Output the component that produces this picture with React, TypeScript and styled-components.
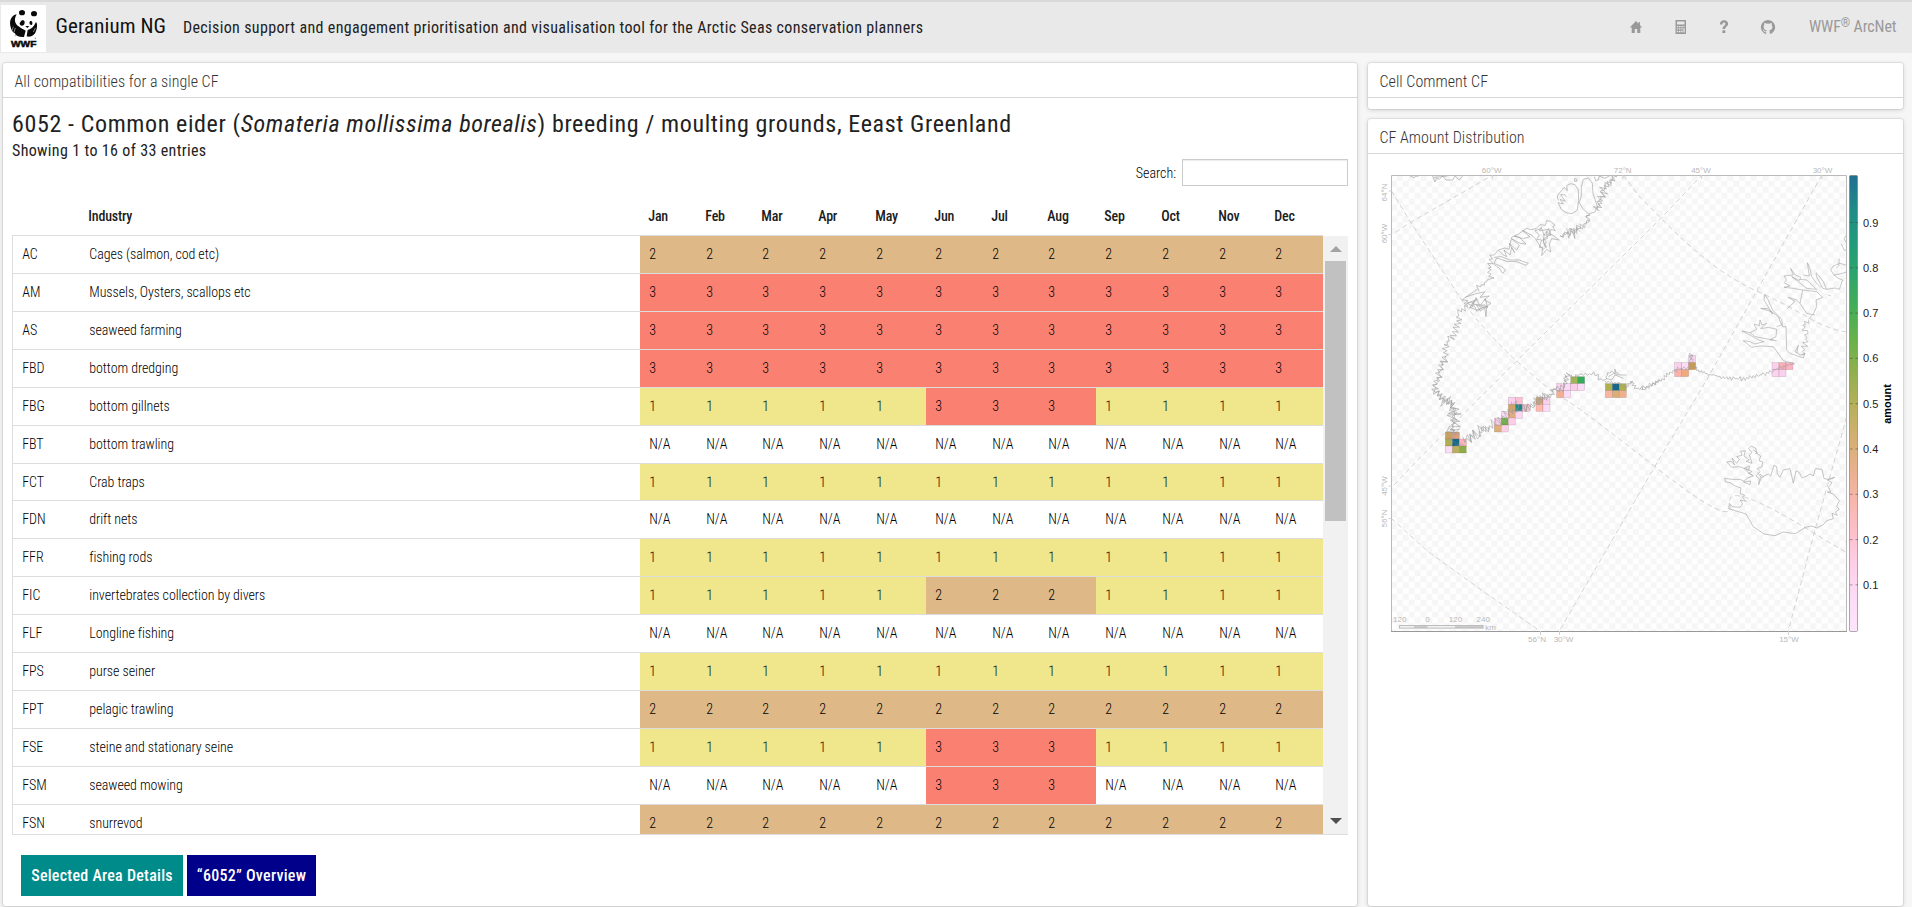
import React from "react";
import styled, { createGlobalStyle } from "styled-components";

const GlobalStyle = createGlobalStyle`
  * { box-sizing: border-box; }
  html, body { margin: 0; padding: 0; }
  body {
    background: #f6f6f6;
    color: #1c1c1c;
    font-family: "Roboto Condensed", Roboto, sans-serif;
    font-size: 16px;
    overflow: hidden;
  }
`;

/* ---------- page shell ---------- */

const Page = styled.div`
  display: flex;
  flex-direction: column;
  width: 1912px;
  height: 907px;
`;

const TopBar = styled.header`
  display: flex;
  align-items: flex-start;
  height: 53px;
  flex: none;
  border-top: 2px solid #dadada;
  background: #e9e9e9;
  padding: 3px 16px 0 1px;
`;

const LogoBox = styled.div`
  width: 45px;
  height: 47px;
  background: #fff;
`;

const Brand = styled.div`
  width: 111px;
  margin-left: 9.5px;
  font-size: 21px;
  line-height: 24px;
  letter-spacing: 0.1px;
  padding-top: 9px;
  color: #111;
  white-space: nowrap;
`;

const Tagline = styled.div`
  margin-left: 16.5px;
  font-size: 16px;
  line-height: 20px;
  letter-spacing: 0.343px;
  padding-top: 13px;
  color: #222;
`;

const Nav = styled.nav`
  display: flex;
  align-items: center;
  margin-left: auto;
  height: 34px;
  padding-top: 10px;
  color: #999;
`;

const NavIcon = styled.svg`
  display: block;
  width: 16px;
  height: 16px;
  margin-right: 28px;
  fill: currentColor;
`;

const NavText = styled.span`
  width: 87px;
  font-size: 16px;
  line-height: 20px;
  margin-left: 5px;
  white-space: nowrap;
  letter-spacing: -0.12px;
  sup {
    font-size: 12px;
    line-height: 0;
    vertical-align: 5px;
  }
`;

const Columns = styled.main`
  display: flex;
  gap: 11px;
  flex: 1;
  padding: 10px 9px 1px 3px;
  min-height: 0;
`;

const SideColumn = styled.div`
  display: flex;
  flex-direction: column;
  gap: 10px;
  width: 535px;
`;

const Panel = styled.section<{ $grow?: boolean }>`
  display: flex;
  flex-direction: column;
  flex: ${(p) => (p.$grow ? "1" : "none")};
  min-width: 0;
  min-height: 0;
  background: #fff;
  border-radius: 3px;
  box-shadow: 0 0 0 1px rgba(0, 0, 0, 0.06), 0 1px 5px rgba(0, 0, 0, 0.16);
`;

const PanelTitle = styled.div`
  height: 35px;
  flex: none;
  padding: 9px 11px 0 11.5px;
  border-bottom: 1px solid #d6d6d6;
  font-size: 16px;
  font-weight: 300;
  line-height: 20px;
  letter-spacing: 0.02px;
  color: #333;
`;

const EmptyBody = styled.div`
  height: 11px;
`;

/* ---------- compatibility table ---------- */

const Content = styled.div`
  display: flex;
  flex-direction: column;
  padding: 11px 9px 0 9px;
`;

const Heading = styled.h1`
  margin: 0;
  font-size: 24px;
  line-height: 30px;
  font-weight: 400;
  letter-spacing: 0.625px;
  white-space: nowrap;
  color: #222;
`;

const Info = styled.div`
  font-size: 16px;
  line-height: 20px;
  letter-spacing: 0.35px;
  margin-top: 2px;
  height: 20px;
  color: #222;
`;

const SearchRow = styled.label`
  display: flex;
  justify-content: flex-end;
  align-items: center;
  height: 27px;
  margin-top: -2px;
  font-size: 14px;
  font-weight: 300;
  color: #000;
  gap: 6px;
`;

const SearchInput = styled.input`
  width: 166px;
  height: 27px;
  border: 1px solid #ccc;
  box-shadow: inset 0 1px 1px rgba(0, 0, 0, 0.075);
  background: #fff;
  outline: none;
`;

const gridColumns =
  "67px 560px 57px 56px 57px 57px 59px 57px 56px 57px 57px 57px 56px 57px";

const HeadRow = styled.div`
  display: grid;
  grid-template-columns: ${gridColumns};
  height: 49px;
  padding: 21px 0 0 1px;
  font-size: 14px;
  font-weight: 500;
  line-height: 18px;
  letter-spacing: -0.2px;
  span {
    padding-left: 8.3px;
  }
`;

const ScrollArea = styled.div`
  display: flex;
  height: 600px;
  border: 1px solid #ddd;
  border-right: 0;
  border-top: 0;
`;

const Rows = styled.div`
  width: 1310px;
  overflow: hidden;
`;

const Row = styled.div<{ $short?: boolean }>`
  display: grid;
  grid-template-columns: ${gridColumns};
  height: ${(p) => (p.$short ? 37 : 38)}px;
  border-top: 1px solid #ddd;
  font-size: 14px;
  font-weight: 300;
  line-height: 18px;
  letter-spacing: -0.07px;
  color: #000;
`;

const tones: Record<string, string> = {
  "1": "#f0e68c",
  "2": "#deb887",
  "3": "#fa8072",
  "N/A": "#fff",
};

const Cell = styled.span<{ $tone?: string }>`
  padding: 9px 0 0 9.3px;
  background: ${(p) => (p.$tone ? tones[p.$tone] : "transparent")};
  white-space: nowrap;
`;

const ScrollBar = styled.div`
  display: flex;
  flex-direction: column;
  align-items: center;
  width: 25px;
  margin-top: 1px;
  background: #f1f1f1;
`;

const Arrow = styled.div<{ $down?: boolean }>`
  width: 0;
  height: 0;
  border: 6px solid transparent;
  ${(p) =>
    p.$down
      ? "border-top-color: #505050; border-bottom: 0; margin: auto 0 10px;"
      : "border-bottom-color: #a3a3a3; border-top: 0; margin: 10px 0 9px;"}
`;

const Thumb = styled.div`
  width: 21px;
  height: 260px;
  background: #c1c1c1;
`;

const Actions = styled.div`
  display: flex;
  gap: 4px;
  padding: 20px 0 0 9px;
`;

const ActionButton = styled.button<{ $color: string; $width: number }>`
  width: ${(p) => p.$width}px;
  height: 41px;
  border: 0;
  padding: 0;
  background: ${(p) => p.$color};
  color: #fff;
  font: 500 16px/20px "Roboto Condensed", Roboto, sans-serif;
  letter-spacing: 0.26px;
`;

/* ---------- map ---------- */

const MapSvg = styled.svg`
  display: block;
  width: 535px;
  height: 500px;
  font-family: "Liberation Sans", Arial, sans-serif;
`;

const months = ["Jan", "Feb", "Mar", "Apr", "May", "Jun", "Jul", "Aug", "Sep", "Oct", "Nov", "Dec"];

const industries: [string, string, string, string?][] = [
  ["AC", "Cages (salmon, cod etc)", "2"],
  ["AM", "Mussels, Oysters, scallops etc", "3"],
  ["AS", "seaweed farming", "3"],
  ["FBD", "bottom dredging", "3"],
  ["FBG", "bottom gillnets", "1", "3"],
  ["FBT", "bottom trawling", "N/A"],
  ["FCT", "Crab traps", "1"],
  ["FDN", "drift nets", "N/A"],
  ["FFR", "fishing rods", "1"],
  ["FIC", "invertebrates collection by divers", "1", "2"],
  ["FLF", "Longline fishing", "N/A"],
  ["FPS", "purse seiner", "1"],
  ["FPT", "pelagic trawling", "2"],
  ["FSE", "steine and stationary seine", "1", "3"],
  ["FSM", "seaweed mowing", "N/A", "3"],
  ["FSN", "snurrevod", "2"],
];

type Pt = [number, number];

/* Breaks a coast line into short jagged steps, with a fixed seed. */
function fjords(points: Pt[], amp: number, step: number, seed: number): string {
  let s = seed;
  const rnd = () => {
    s = (s * 16807) % 2147483647;
    return s / 2147483647 - 0.5;
  };
  let d = `M${points[0][0]} ${points[0][1]}`;
  for (let i = 1; i < points.length; i++) {
    const [x0, y0] = points[i - 1];
    const [x1, y1] = points[i];
    const len = Math.hypot(x1 - x0, y1 - y0);
    const n = Math.max(1, Math.round(len / step));
    const nx = -(y1 - y0) / len;
    const ny = (x1 - x0) / len;
    for (let k = 1; k <= n; k++) {
      const side = k % 2 ? 1 : -1;
      const o = side * Math.abs(rnd()) * amp * 2 + rnd() * amp * 0.4;
      const t = k / n;
      d += `L${(x0 + (x1 - x0) * t + nx * o).toFixed(1)} ${(y0 + (y1 - y0) * t + ny * o).toFixed(1)}`;
    }
  }
  return d;
}

const westCoast: Pt[] = [[316, 412], [322, 440], [297, 455], [290, 500], [275, 535], [257, 548], [258, 590], [242, 625], [232, 660], [224, 690], [250, 715], [280, 735], [285, 765], [275, 800], [285, 822]];
const westNorth: Pt[] = [[770, 50], [742, 75], [725, 105], [710, 150]];
const westMid: Pt[] = [[690, 165], [680, 190], [640, 215], [600, 228]];
const discoBay: Pt[] = [[402, 285], [385, 318], [388, 355], [352, 388]];
const delta: Pt[] = [[322, 430], [350, 425], [385, 432], [350, 440], [378, 450], [330, 435]];
const southEast: Pt[] = [[308, 830], [322, 830], [348, 822], [390, 800], [412, 790], [440, 765], [470, 745]];
const eastA: Pt[] = [[455, 725], [480, 740], [520, 742], [540, 715], [575, 705], [590, 685]];
const eastB: Pt[] = [[590, 690], [612, 685], [625, 640], [640, 655], [665, 640], [700, 645], [735, 662], [745, 640], [766, 630], [775, 640]];
const eastC: Pt[] = [[735, 662], [785, 672], [802, 682], [815, 662], [825, 683], [850, 685], [880, 674], [900, 660]];
const eastD: Pt[] = [[0, 685], [40, 672], [75, 652], [104, 630], [148, 622], [152, 580], [160, 620], [175, 630], [210, 645], [260, 652], [310, 658], [360, 645], [395, 635], [430, 618], [462, 610]];

const cellsWest: [number, number, string][] = [
  [256, 816, "#c9a261"], [277, 816, "#dda07a"],
  [256, 837, "#b0b04c"], [277, 837, "#16688a"], [298, 837, "#ffb3ba"],
  [256, 858, "#fbdcf6"], [277, 858, "#bfb15c"], [298, 858, "#8aaf3f"],
  [445, 712, "#fad0ee"], [466, 712, "#fcc0d0"],
  [445, 733, "#d0a468"], [466, 733, "#17878a"], [487, 733, "#fbc0d0"],
  [424, 754, "#fbdcf6"], [445, 754, "#e0ab80"], [466, 754, "#fbd5f2"],
  [403, 774, "#fcd0ea"], [424, 774, "#6cb243"], [445, 774, "#fccde6"],
  [403, 795, "#dbb07c"], [424, 795, "#fccfe8"],
  [528, 712, "#d9a777"], [549, 712, "#fad0ee"],
  [528, 733, "#ffb9b0"], [549, 733, "#fbdcf6"],
  [632, 650, "#a3b552"], [653, 650, "#35aa5a"],
  [590, 671, "#fbd0ee"], [611, 671, "#fbdaf5"], [632, 671, "#fccde8"], [653, 671, "#fbdcf6"],
  [590, 692, "#f4ae90"], [611, 692, "#fbdcf6"],
  [736, 671, "#b0b04c"], [757, 671, "#16688a"], [778, 671, "#b0b04c"],
  [736, 692, "#f9b5a0"], [757, 692, "#dcae77"], [778, 692, "#efb08e"],
];

const cellsEast: [number, number, string][] = [
  [146, 587, "#fbd5f2"],
  [104, 608, "#fbd0ec"], [125, 608, "#fbdcf6"], [146, 608, "#cf9c45"],
  [104, 629, "#fbb0a8"], [125, 629, "#efab7c"],
  [396, 608, "#fbd0ea"], [417, 608, "#f9b0b4"], [438, 608, "#fcb4c4"],
  [396, 629, "#fbd3f0"], [417, 629, "#fbd0ee"],
];

const ramp = ["#fce6fb", "#fcdcf6", "#fdd0e8", "#fdc0cc", "#f8b6ac", "#e8b08c", "#d2b070", "#b4b058", "#8fb04c", "#66b24a", "#42ad58", "#2ca56c", "#229a7c", "#1f8a88", "#216f92"];

const meridians = [
  "M1395.7 232.3L1410.7 222.3L1492.3 175.3",
  "M1391.3 190.7L1410.7 222.3L1461.7 300Q1485 332 1516.7 361T1563 398T1656.7 468T1730 504T1813.3 532.7T1845 541",
  "M1394 485L1420 457.7L1516.7 361L1660 219.3L1701.7 175.3",
  "M1623.3 175.3L1640 197.3L1660 217.3Q1683 241 1706.7 260T1756.7 291T1806.7 316.7T1845.7 331.7",
  "M1821.7 175.3L1756.7 291L1706.7 380L1660 457.7L1559.3 631",
  "M1391.3 518.3L1428.3 551.7L1476.7 586.7L1540 631",
  "M1846.7 416.7L1815 530L1788.3 631",
];

function DistributionMap() {
  return (
    <MapSvg viewBox="1368 154 535 500">
      <defs>
        <pattern id="check" x="1391" y="175" width="11.8" height="11.8" patternUnits="userSpaceOnUse">
          <rect width="11.8" height="11.8" fill="#fefefe" />
          <rect x="5.9" width="5.9" height="5.9" fill="#f6f6f6" />
          <rect y="5.9" width="5.9" height="5.9" fill="#f6f6f6" />
        </pattern>
        <linearGradient id="ramp" x1="0" y1="1" x2="0" y2="0">
          {ramp.map((c, i) => (
            <stop key={c} offset={i / (ramp.length - 1)} stopColor={c} />
          ))}
        </linearGradient>
        <clipPath id="frame">
          <rect x="1391" y="175" width="456" height="456" />
        </clipPath>
      </defs>

      <rect x="1391.5" y="175.5" width="455" height="456" fill="url(#check)" />

      <g clipPath="url(#frame)" fill="none">
        {meridians.map((d) => (
          <path key={d} d={d} stroke="#cdcdcd" strokeWidth="0.9" strokeDasharray="5 3.5" />
        ))}

        <g transform="translate(1360 160) scale(.33333)">
          {cellsWest.map(([x, y, c]) => (
            <rect key={`${x}-${y}`} x={x} y={y} width="21" height="21" fill={c} stroke="#705060" strokeOpacity="0.35" strokeWidth="1.5" />
          ))}
          <g stroke="#9a9a9a" strokeWidth="2.2" strokeOpacity="0.8">
            <path d={fjords(westCoast, 11, 6, 11)} />
            <path d={fjords(westCoast.slice(6), 12, 6, 9173)} />
            <path d={fjords(westCoast.slice(10), 22, 7, 5519)} />
            <path d={fjords(westNorth, 16, 6, 2311)} />
            <path d={fjords(westNorth, 12, 8, 3701)} />
            <path d={fjords(westMid, 11, 6, 4177)} />
            <path d={fjords(westMid, 11, 9, 4391)} />
            <path d={fjords([[660, 215], [640, 222], [620, 222]], 16, 6, 1213)} />
            <path d={fjords(discoBay, 12, 6, 5333)} />
            <path d={fjords(delta, 14, 12, 6121)} />
            <path d={fjords([[545, 200], [560, 230], [555, 270]], 16, 8, 7717)} />
            <path d={fjords(southEast, 18, 6, 7129)} />
            <path d={fjords([[320, 835], [350, 818], [385, 800]], 18, 7, 811)} />
            <path d={fjords(eastA, 14, 6, 8363)} />
            <path d={fjords([[490, 745], [520, 738], [545, 712], [580, 700]], 12, 6, 2917)} />
            <path d={fjords(eastB, 9, 6, 9749)} />
            <path d={fjords([[570, 690], [610, 680], [622, 645]], 9, 6, 3361)} />
            <path d={fjords(eastC, 6, 5, 1013)} />
            <path d={fjords([[258, 818], [300, 822], [262, 845], [310, 850], [280, 865], [318, 866]], 8, 9, 1789)} strokeOpacity="0.45" />
            <path d="M352 388L316 412L345 402L375 395L360 412L388 408L372 420L393 430L380 440L378 470L374 440L350 450L330 442L342 425L320 430L352 418L335 432L370 436" />
            <path d="M402 285L415 270L435 264L447 268L455 232L475 222L500 205L512 209L528 206L540 194L556 196L560 182L572 184L585 196L578 200L586 212L573 208L570 220L598 240L575 236L568 252L572 276L560 268L545 287L548 262L538 262L545 240L530 238L538 225L525 212L545 205L552 225L550 250L560 262L548 240L562 236L560 214L572 226L566 205" />
            <path d="M402 292L425 290L450 300L478 300L505 310L498 316L470 305L440 304L410 294L402 310L425 320L437 330L428 340L418 325L400 312" />
            <path d="M415 270L430 285L440 290L432 270L450 285L455 262L464 278L447 250L470 270L478 256L455 236L480 250L498 252L478 232L462 228L490 236L510 230L488 212L515 225L525 235L535 250L545 265" />
            <path d="M595 122L592 108L604 92L612 82L622 92L620 76L632 71L645 74L655 90L656 122L652 150L636 161L618 158L604 148L594 128L610 132L600 118L616 124L602 104L614 104L620 112" />
            <path d="M664 80L670 58L685 54L697 70L699 100L712 140L705 156L685 162L668 145L658 128L664 108ZM644 64L643 56L650 57L651 64ZM703 50L707 62L715 60L718 48L735 55L748 48" />
            <path d="M150 48L162 53L168 48L175 50M218 48L225 66L230 54L238 58L248 48L258 60L278 60L285 48L298 60L308 48M222 52L245 50L262 48" />
            <path d="M745 650L760 641L780 645L800 645M740 655L755 660L765 645L790 655" />
          </g>
        </g>

        <g transform="translate(1640 160) scale(.33333)">
          {cellsEast.map(([x, y, c]) => (
            <rect key={`${x}-${y}`} x={x} y={y} width="21" height="21" fill={c} stroke="#705060" strokeOpacity="0.35" strokeWidth="1.5" />
          ))}
          <g stroke="#9c9c9c" strokeWidth="2.1" strokeOpacity="0.8">
            <path d={fjords(eastD, 7, 5, 1137)} />
            <path d="M465 612L430 602L400 560L360 558L335 562L310 542L330 545L345 552L372 545L355 540L330 525L306 513L330 518L350 508L342 492L358 497L360 480L366 495L380 490L362 506L385 502L410 508L408 530L390 540L410 542M330 518L345 530L372 535L400 540M410 500L425 495L415 470L395 455L362 445L385 446L398 462L372 420L374 404L382 415L398 450L425 478L428 500L438 500L440 570L450 580L490 594L495 580L482 585L465 575L475 556L470 580" />
            <path d={fjords([[485, 585], [495, 550], [500, 520], [490, 495], [505, 480]], 9, 6, 1319)} />
            <path d="M505 478L520 462L530 440L528 420L548 412L530 395L505 392L488 390L480 430L500 460L525 465M480 430L470 420L445 412L465 424L442 446M488 390L460 385L432 382L450 378L432 368L440 360L432 348L460 345L452 325L466 345L482 352L478 362L455 350L475 365L500 385L530 388L500 360L478 358M490 345L508 348L502 308L510 325L514 348L530 370L542 382M528 338L530 350L548 385L560 388L550 365L535 345L528 338M560 388L585 384L598 388L608 360L595 355L582 345L572 330L580 318L600 310L620 316M582 345L600 342L620 336M565 405L572 408M598 296L596 318L588 325M620 225L612 236L620 250M604 252L612 270L620 272" />
          </g>
        </g>

        <g transform="translate(1640 400) scale(.33333)" stroke="#acacac" strokeWidth="2.1">
          <path d="M266 326L268 310L278 320L300 322L308 312L300 300L318 304L306 292L314 286L300 280L303 264L285 258L270 248L256 246L254 235L276 238L300 238L316 246L332 243L330 254L310 246L322 234L340 228L325 218L312 205L326 212L328 198L312 205L298 200L275 202L260 186L274 184L284 195L276 174L290 190L298 178L290 170L306 166L302 154L316 152L312 168L328 180L318 184L336 190L328 165L336 158L326 146L334 138L348 146L350 160L362 168L357 182L368 186L366 200L352 206L360 215L348 228L358 236L356 254L364 232L385 222L392 228L402 196L410 200L412 222L420 232L430 210L450 206L460 250L468 212L478 218L486 234L500 228L510 222L520 228L526 206L546 208L552 236L568 238L584 232L562 240L576 248L566 262L572 276L562 276L580 282L598 302L590 320L598 328L586 336L592 346L576 340L580 356L560 362L550 374L530 384L515 378L496 382L466 401L430 396L405 407L372 402L340 380L318 342L266 326" />
          <path d="M340 150L352 158L345 162M318 205L335 215L325 220L338 226M352 215L365 235M360 222L372 232" />
        </g>
      </g>

      <path d="M1391.5 631.5V175.5H1846.5V631.5" fill="none" stroke="#b9bab9" />
      <path d="M1391 631.5H1847" stroke="#989898" />
      <path d="M1492.3 175v4M1623 175v4M1701.7 175v4M1821.7 175v4M1388.5 191h3M1388.5 234.5h3M1388.5 486h3M1388.5 518.5h3M1540.5 631v4M1559.5 631v4M1788.5 631v4" stroke="#d0d0d0" />

      <rect x="1399.5" y="625.5" width="83.5" height="2.6" fill="#f2f2f2" stroke="#bdbdbd" />
      <path d="M1414 627H1427.5M1455 627H1483" stroke="#a8a8a8" />
      <g fontSize="8" fill="#b8b8b8" textAnchor="middle">
        <text x="1491.7" y="172.5">60°W</text>
        <text x="1622.7" y="172.5">72°N</text>
        <text x="1701" y="172.5">45°W</text>
        <text x="1822.5" y="172.5">30°W</text>
        <text x="1537" y="641.5">56°N</text>
        <text x="1563.5" y="641.5">30°W</text>
        <text x="1789" y="641.5">15°W</text>
        <text transform="translate(1386.5 192.5) rotate(-90)">64°N</text>
        <text transform="translate(1386.5 233.5) rotate(-90)">60°W</text>
        <text transform="translate(1386.5 486) rotate(-90)">45°W</text>
        <text transform="translate(1386.5 518.5) rotate(-90)">56°N</text>
        <text x="1399.7" y="622.2">120</text>
        <text x="1427.5" y="622.2">0</text>
        <text x="1455.5" y="622.2">120</text>
        <text x="1483.3" y="622.2">240</text>
        <text x="1490.7" y="629.8">km</text>
      </g>

      <rect x="1849.5" y="175.5" width="8" height="456" rx="1" fill="url(#ramp)" stroke="#777" strokeOpacity="0.6" />
      {[9, 8, 7, 6, 5, 4, 3, 2, 1].map((n, i) => {
        const y = 222.5 + i * 45.3;
        return (
          <g key={n}>
            <path d={`M1850 ${y}h2.5M1855.5 ${y}h2.5`} stroke="#333" strokeOpacity="0.55" strokeWidth="0.8" />
            <text x="1863" y={y + 4} fontSize="11" fill="#222">
              {`0.${n}`}
            </text>
          </g>
        );
      })}
      <text transform="translate(1890.5 404) rotate(-90)" fontSize="11" fontWeight="700" fill="#000" textAnchor="middle">
        amount
      </text>
    </MapSvg>
  );
}

function PandaLogo() {
  return (
    <svg width="45" height="47" viewBox="3 15 135 141">
      <g fill="#0a0a0a">
        <ellipse cx="66" cy="38" rx="9" ry="8" />
        <ellipse cx="102" cy="41" rx="9" ry="8" />
        <path d="M50 43C34 46 28 62 31 77C33 90 38 96 44 99C47 108 58 112 72 111L77 92C72 88 64 86 58 80C44 74 41 58 50 43Z" />
        <path d="M64 62C72 58 77 66 72 74C66 80 58 76 59 69Z" />
        <path d="M90 64C96 60 100 70 95 75C90 76 86 70 90 64Z" />
        <path d="M76 78H88L82 84Z" />
        <path d="M108 66C114 72 111 92 104 101C98 108 88 112 80 109L83 90C94 88 102 80 108 66Z" />
        <circle cx="46" cy="107" r="2" fill="#aaa" />
        <circle cx="106" cy="115" r="2.5" fill="#aaa" />
      </g>
      <path d="M36 92L40 80M42 96L46 84M100 96L106 84" stroke="#fff" strokeWidth="1.5" />
      <text x="71" y="140" fontFamily="Liberation Sans, Arial, sans-serif" fontWeight="700" fontSize="26" textAnchor="middle" textLength="76" lengthAdjust="spacingAndGlyphs" stroke="#0a0a0a" strokeWidth="1.5" fill="#0a0a0a">
        WWF
      </text>
    </svg>
  );
}

export default function App() {
  return (
    <Page>
      <GlobalStyle />
      <TopBar>
        <LogoBox>
          <PandaLogo />
        </LogoBox>
        <Brand>Geranium NG</Brand>
        <Tagline>
          Decision support and engagement prioritisation and visualisation tool for the Arctic Seas
          conservation planners
        </Tagline>
        <Nav>
          <NavIcon viewBox="0 0 16 16">
            <path d="M8 2L1.8 8.5H3.7V14H6.8V10H9.2V14H12.3V8.5H14.2L12 6.2V3H10.7V4.8Z" />
          </NavIcon>
          <NavIcon viewBox="0 0 16 16">
            <path fillRule="evenodd" d="M3.5 1H14V15H3.5ZM5 2.5V5.5H12.5V2.5ZM4.8 7V8.3H6.3V7ZM7 7V8.3H8.5V7ZM9.2 7V8.3H10.7V7ZM11.4 7V8.3H12.7V7ZM4.8 9.3V10.6H6.3V9.3ZM7 9.3V10.6H8.5V9.3ZM9.2 9.3V10.6H10.7V9.3ZM11.4 9.3V13.5H12.7V9.3ZM4.8 11.7V13.2H6.3V11.7ZM7 11.7V13.2H8.5V11.7ZM9.2 11.7V13.2H10.7V11.7Z" />
          </NavIcon>
          <NavIcon viewBox="0 0 16 16">
            <path d="M3.8 5.5C3.8 2.8 5.5 1.2 8 1.2C10.5 1.2 12.1 2.7 12.1 4.8C12.1 7.5 9.2 7.6 9.2 10H6.5C6.5 6.8 9.3 6.7 9.3 5C9.3 4.1 8.8 3.6 8 3.6C7 3.6 6.5 4.3 6.5 5.5ZM6.4 11.3H9.3V14H6.4Z" />
          </NavIcon>
          <NavIcon viewBox="0 0 16 16">
            <path d="M8 .9A7.2 7.2 0 0 0 5.7 14.9C6.1 15 6.2 14.8 6.2 14.6V13.2C4.2 13.6 3.8 12.3 3.8 12.3C3.4 11.5 3 11.2 3 11.2C2.3 10.8 3 10.8 3 10.8C3.8 10.8 4.2 11.5 4.2 11.5C4.8 12.7 5.9 12.4 6.3 12.2C6.4 11.7 6.6 11.4 6.8 11.3C5.2 11.1 3.6 10.5 3.6 7.8C3.6 7 3.9 6.4 4.3 5.9C4.2 5.7 4 4.9 4.4 4C4.4 4 5 3.8 6.4 4.7Q8 4.3 9.6 4.7C11 3.8 11.6 4 11.6 4C12 4.9 11.8 5.7 11.7 5.9C12.1 6.4 12.4 7 12.4 7.8C12.4 10.5 10.8 11.1 9.2 11.3C9.5 11.5 9.8 12 9.8 12.7V14.6C9.8 14.8 9.9 15 10.3 14.9A7.2 7.2 0 0 0 8 .9Z" />
          </NavIcon>
          <NavText>
            WWF<sup>®</sup> ArcNet
          </NavText>
        </Nav>
      </TopBar>

      <Columns>
        <Panel $grow>
          <PanelTitle>All compatibilities for a single CF</PanelTitle>
          <Content>
            <Heading>
              6052 - Common eider (<em>Somateria mollissima borealis</em>) breeding / moulting
              grounds, Eeast Greenland
            </Heading>
            <Info>Showing 1 to 16 of 33 entries</Info>
            <SearchRow>
              Search:
              <SearchInput />
            </SearchRow>
            <HeadRow>
              <span />
              <span>Industry</span>
              {months.map((m) => (
                <span key={m}>{m}</span>
              ))}
            </HeadRow>
            <ScrollArea>
              <Rows>
                {industries.map(([code, name, base, summer]) => (
                  <Row key={code} $short={code === "FCT"}>
                    <Cell>{code}</Cell>
                    <Cell>{name}</Cell>
                    {months.map((m, i) => {
                      const v = summer && i >= 5 && i <= 7 ? summer : base;
                      return (
                        <Cell key={m} $tone={v}>
                          {v}
                        </Cell>
                      );
                    })}
                  </Row>
                ))}
              </Rows>
              <ScrollBar>
                <Arrow />
                <Thumb />
                <Arrow $down />
              </ScrollBar>
            </ScrollArea>
            <Actions>
              <ActionButton $color="#008b8b" $width={162}>
                Selected Area Details
              </ActionButton>
              <ActionButton $color="#00008b" $width={129}>
                “6052” Overview
              </ActionButton>
            </Actions>
          </Content>
        </Panel>

        <SideColumn>
          <Panel>
            <PanelTitle>Cell Comment CF</PanelTitle>
            <EmptyBody />
          </Panel>
          <Panel $grow>
            <PanelTitle>CF Amount Distribution</PanelTitle>
            <DistributionMap />
          </Panel>
        </SideColumn>
      </Columns>
    </Page>
  );
}
